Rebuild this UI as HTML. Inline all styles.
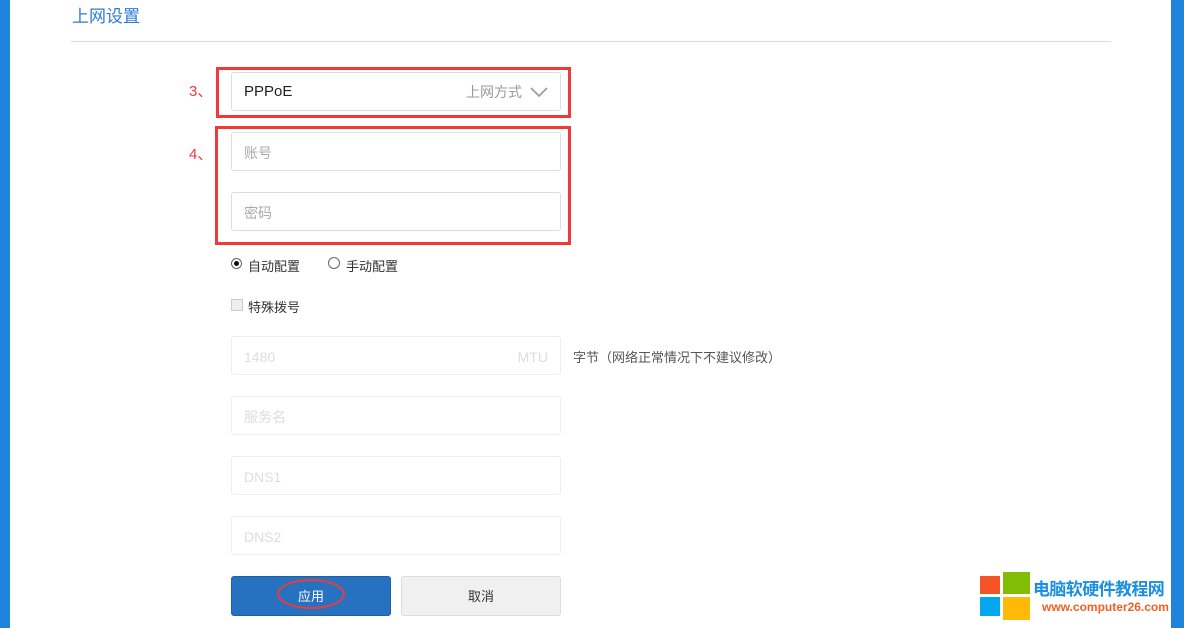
<!DOCTYPE html><html><head><meta charset="utf-8"><style>
body{margin:0;width:1184px;height:628px;position:relative;background:#fff;font-family:"Liberation Sans","Noto Sans CJK SC",sans-serif;overflow:hidden}
.a{position:absolute}
.inp{position:absolute;left:231px;width:330px;height:39px;border:1px solid #ddd;border-radius:3px;box-sizing:border-box;font-size:14px;color:#aaa;padding-left:12px;line-height:40px}
.dis{border-color:#eee;color:#ddd}
.red{position:absolute;border:3px solid #f03a3a;box-sizing:border-box}
.btn{position:absolute;top:576px;width:160px;height:40px;border-radius:3px;box-sizing:border-box;font-size:13px;text-align:center;line-height:40px}
</style></head><body>
<div class="a" style="left:0;top:0;width:10px;height:628px;background:#1e84dc"></div>
<div class="a" style="left:1171px;top:0;width:13px;height:628px;background:#1e84dc"></div>
<div class="a" style="left:72px;top:2px;font-size:17px;color:#2b7cd3">上网设置</div>
<div class="a" style="left:71px;top:41px;width:1040px;height:1px;background:#ddd"></div>
<div class="a" style="left:189px;top:80px;color:#f03a3a;font-size:15px">3、</div>
<div class="a" style="left:189px;top:143px;color:#f03a3a;font-size:15px">4、</div>
<div class="inp" style="top:72px;color:#222;font-size:15px;line-height:38px">PPPoE<span class="a" style="right:38px;top:0;color:#999;font-size:14px">上网方式</span><svg class="a" style="right:12px;top:14px" width="18" height="11"><path d="M1 1l8 8 8-8" stroke="#999" stroke-width="1.6" fill="none"/></svg></div>
<div class="red" style="left:216px;top:67px;width:355px;height:51px"></div>
<div class="inp" style="top:132px">账号</div>
<div class="inp" style="top:192px">密码</div>
<div class="red" style="left:215px;top:126px;width:356px;height:119px"></div>
<div class="a" style="left:231px;top:258px;width:11px;height:11px;border:1px solid #666;border-radius:50%;box-sizing:border-box"><div class="a" style="left:2px;top:2px;width:5px;height:5px;border-radius:50%;background:#111"></div></div>
<div class="a" style="left:248px;top:256px;font-size:13px;color:#333">自动配置</div>
<div class="a" style="left:328px;top:257px;width:12px;height:12px;border:1px solid #666;border-radius:50%;box-sizing:border-box"></div>
<div class="a" style="left:346px;top:256px;font-size:13px;color:#333">手动配置</div>
<div class="a" style="left:231px;top:299px;width:12px;height:12px;border:1px solid #ccc;background:#eee;box-sizing:border-box"></div>
<div class="a" style="left:248px;top:297px;font-size:13px;color:#333">特殊拨号</div>
<div class="inp dis" style="top:336px">1480<span class="a" style="right:12px;top:0">MTU</span></div>
<div class="a" style="left:573px;top:347px;font-size:13px;color:#555">字节（网络正常情况下不建议修改）</div>
<div class="inp dis" style="top:396px">服务名</div>
<div class="inp dis" style="top:456px">DNS1</div>
<div class="inp dis" style="top:516px">DNS2</div>
<div class="btn" style="left:231px;background:#2672c0;border:1px solid #1d5fa8;color:#fff">应用</div>
<div class="a" style="left:277px;top:579px;width:68px;height:30px;border:2px solid #f03a3a;border-radius:50%;box-sizing:border-box"></div>
<div class="btn" style="left:401px;background:#f0f0f0;border:1px solid #ddd;color:#333">取消</div>
<div class="a" style="left:980px;top:576px;width:20px;height:18px;background:#f35325"></div>
<div class="a" style="left:1003px;top:572px;width:27px;height:22px;background:#81bc06"></div>
<div class="a" style="left:980px;top:597px;width:20px;height:19px;background:#05a6f0"></div>
<div class="a" style="left:1003px;top:597px;width:27px;height:23px;background:#ffba08"></div>
<div class="a" style="left:1033px;top:575px;font-size:17px;font-weight:bold;color:#1b8fe0;white-space:nowrap;letter-spacing:-0.6px">电脑软硬件教程网</div>
<div class="a" style="left:1042px;top:600px;font-size:12px;font-weight:bold;color:#f06022;white-space:nowrap">www.computer26.com</div>
</body></html>
